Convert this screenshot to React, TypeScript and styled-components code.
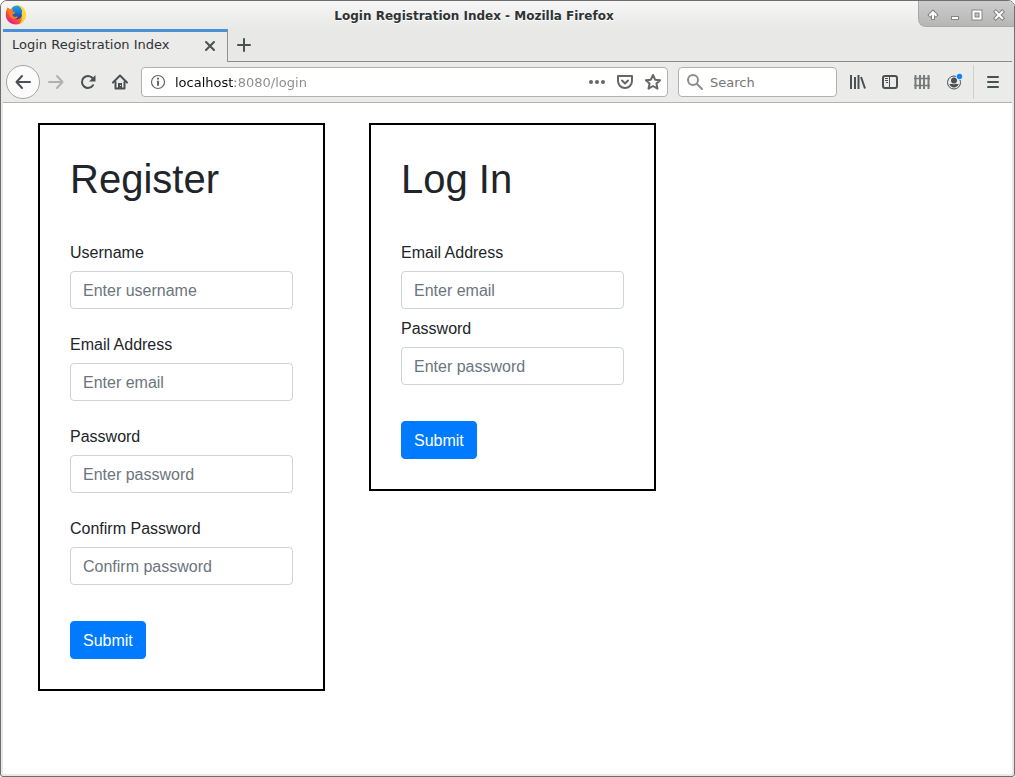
import React from "react";
import styled, { createGlobalStyle, css } from "styled-components";

const GlobalStyle = createGlobalStyle`
  *, *::before, *::after { box-sizing: border-box; }
  body { margin: 0; background: #fff; }
  button, input { font: inherit; color: inherit; }
`;

const chromeFont = `"DejaVu Sans", sans-serif`;
const pageFont = `"Liberation Sans", Arial, sans-serif`;

const BrowserWindow = styled.div`
  display: flex;
  flex-direction: column;
  min-height: 100vh;
  border: 1px solid #6e6e6e;
  border-radius: 7px 7px 3px 3px;
  background: #e8e8e7;
  overflow: hidden;
  font-family: ${chromeFont};
  font-size: 13px;
  color: #2e3436;
`;

const TitleBar = styled.header`
  display: flex;
  align-items: flex-start;
  height: 28px;
  background: linear-gradient(#f6f6f6, #e8e8e7);
`;

const AppIcon = styled.div`
  display: flex;
  width: 29px;
  padding: 3px 0 0 4px;
`;

const WindowTitle = styled.div`
  flex: 1;
  min-width: 0;
  text-align: center;
  font-size: 12px;
  font-weight: bold;
  line-height: 30px;
  white-space: nowrap;
  text-shadow: 0 1px 0 #fff;
`;

const WindowControls = styled.div`
  display: flex;
  justify-content: center;
  gap: 6px;
  width: 96px;
  height: 26px;
  padding: 6px 2px 4px 0;
  border: solid #a9a9a9;
  border-width: 0 0 1px 1px;
  border-radius: 0 0 0 8px;
  background: linear-gradient(#cdcdcd, #b6b6b6);
`;

const PlainButton = styled.button`
  display: flex;
  align-items: center;
  justify-content: center;
  padding: 0;
  border: 0;
  background: none;
`;

const ControlButton = styled(PlainButton)`
  width: 16px;
  height: 16px;
`;

const TabStrip = styled.div`
  display: flex;
  height: 33px;
  padding: 0 2px;
`;

const Tab = styled.div`
  display: flex;
  align-items: flex-start;
  justify-content: space-between;
  width: 225px;
  padding: 0 9px;
  border-top: 3px solid #4a90d9;
  border-right: 1px solid #919191;
  background: #ebebe9;
  line-height: 26px;
`;

const TabRest = styled.div`
  flex: 1;
  padding-left: 6px;
  border-bottom: 1px solid #8c8c8b;
`;

const TabButton = styled(PlainButton)`
  width: 16px;
  height: 28px;
  color: #4a5053;
`;

const NewTabButton = styled(PlainButton)`
  width: 20px;
  height: 32px;
  color: #4a5053;
`;

const NavBar = styled.nav`
  display: flex;
  align-items: center;
  height: 41px;
  margin: 0 2px;
  padding: 0 3px;
  border-bottom: 1px solid #b3b3b0;
  background: #ebebe9;
  color: #4a5053;
`;

const NavButton = styled(PlainButton)<{ $round?: boolean }>`
  flex: none;
  width: 32px;
  height: 34px;
  ${(p) =>
    p.$round &&
    css`
      width: 34px;
      border: 1px solid #a5a5a4;
      border-radius: 50%;
      background: #fbfbfb;
    `}
`;

const fieldBox = css`
  display: flex;
  align-items: center;
  height: 30px;
  border: 1px solid #b1b1af;
  border-radius: 4px;
  background: #fff;
`;

const AddressBar = styled.div`
  ${fieldBox}
  flex: 1;
  min-width: 0;
  gap: 9px;
  margin: 0 10px 0 5px;
  padding: 0 5px 0 8px;
  color: #666;
`;

const AddressInput = styled.input`
  flex: 1;
  min-width: 0;
  height: 28px;
  padding: 0;
  border: 0;
  outline: 0;
  background: linear-gradient(to right, #0c0c0d 60px, #8a8a8a 60px);
  background-clip: text;
  -webkit-text-fill-color: transparent;
`;

const AddressActions = styled.div`
  display: flex;
  gap: 10px;
`;

const AddressButton = styled(PlainButton)`
  width: 18px;
  height: 28px;
`;

const SearchBar = styled.label`
  ${fieldBox}
  flex: none;
  width: 159px;
  gap: 6px;
  margin-right: 5px;
  padding: 0 7px;
  color: #8c8c8c;
`;

const SearchInput = styled.input`
  flex: 1;
  min-width: 0;
  height: 28px;
  padding: 0;
  border: 0;
  outline: 0;
  background: none;
  &::placeholder { color: #757575; opacity: 1; }
`;

const MenuSlot = styled.div`
  margin-left: 3px;
  padding-left: 3px;
  border-left: 1px solid #cfcfcd;
`;

const Page = styled.main`
  flex: 1;
  display: flex;
  flex-wrap: wrap;
  align-items: flex-start;
  align-content: flex-start;
  gap: 44px;
  margin: 0 2px 2px;
  padding: 20px 35px;
  background: #fff;
  font-family: ${pageFont};
  font-size: 16px;
  line-height: 24px;
  color: #212529;
`;

const Card = styled.section`
  width: 287px;
  padding: 30px;
  border: 2px solid #000;
`;

const Heading = styled.h1`
  margin: 0 0 38px;
  font-size: 40px;
  font-weight: 500;
  line-height: 48px;
`;

const Form = styled.form`
  display: flex;
  flex-direction: column;
  gap: 36px;
`;

const Fields = styled.div<{ $gap: number }>`
  display: flex;
  flex-direction: column;
  gap: ${(p) => p.$gap}px;
`;

const Field = styled.div`
  display: flex;
  flex-direction: column;
  gap: 6px;
`;

const TextInput = styled.input`
  width: 100%;
  height: 38px;
  padding: 7px 12px 5px;
  border: 1px solid #ced4da;
  border-radius: 4px;
  background: #fff;
  &::placeholder { color: #6c757d; opacity: 1; }
`;

const SubmitButton = styled.button`
  align-self: flex-start;
  height: 38px;
  padding: 7px 12px 5px;
  border: 1px solid #007bff;
  border-radius: 4px;
  background: #007bff;
  color: #fff;
`;

const FirefoxLogo = () => (
  <svg width="22" height="22" viewBox="0 0 22 22" aria-hidden="true">
    <defs>
      <linearGradient id="flame" x1="0.85" y1="0.1" x2="0.15" y2="0.9">
        <stop offset="0" stopColor="#fff04a" />
        <stop offset="0.35" stopColor="#ffb416" />
        <stop offset="0.6" stopColor="#ff5a2a" />
        <stop offset="1" stopColor="#e5168c" />
      </linearGradient>
      <linearGradient id="globe" x1="0.5" y1="0" x2="0.5" y2="1">
        <stop offset="0" stopColor="#16a8f5" />
        <stop offset="1" stopColor="#2a3aa8" />
      </linearGradient>
    </defs>
    <path d="M2.6 3.4 4.6 5 7 4.4C8.500 2 11 .8 13.500 1.200 18 2 21 6 21 10.500c0 5.500-4.500 10-10 10S.8 16.500.8 11c0-2.800.6-5.500 1.800-7.600z" fill="url(#flame)" />
    <path d="M7 3.800C9 1.600 13 1 15.400 3.400c1.800 2 2.400 5 1.600 8-1 3-4 4.400-6.600 3.800-3-.6-4.600-3-4.200-5.600z" fill="url(#globe)" />
    <path d="M2.600 3.800 5.200 5.400 8 5l-.4 2.200 2.600 1-.8 1.400-2 .8c.2 2 2 2.800 4 2.200l1.600.2c-1 2-3.600 2.800-5.600 1.800C4 13 3 9 2.600 3.800z" fill="#ff7a1c" />
    <path d="M14.500 1.600c4 1.600 6.300 5 6.200 9.400-.2 4-2.700 7.400-6.200 8.600 2.500-3 3.300-5.600 2.500-8.600-.5-2-.2-3 .2-4.200-.4-2-1.400-3.800-2.700-5.200z" fill="#ffd92e" />
  </svg>
);

const Svg = ({ children }: { children: React.ReactNode }) => (
  <svg
    width="16"
    height="16"
    viewBox="0 0 16 16"
    fill="none"
    stroke="currentColor"
    strokeWidth="2"
    strokeLinecap="round"
    strokeLinejoin="round"
    aria-hidden="true"
  >
    {children}
  </svg>
);

const OutlinedGlyph = ({ d }: { d: string }) => (
  <svg width="16" height="16" viewBox="0 0 16 16" fill="none" strokeLinecap="square" aria-hidden="true">
    <path d={d} stroke="#858585" strokeWidth="4" />
    <path d={d} stroke="#fff" strokeWidth="2" />
  </svg>
);

const controls = [
  { label: "Shade", d: "M8 11V5.500M5.200 8 8 5.200 10.800 8" },
  { label: "Minimize", d: "M6 11h4" },
  { label: "Maximize", d: "M4.500 4.500h7v7h-7z" },
  { label: "Close", d: "M4.800 4.800l6.400 6.400M11.200 4.800l-6.400 6.400" },
];

const LibraryIcon = () => (
  <Svg>
    <path d="M1 1v14M5 3v12M8.500 1v14" strokeLinecap="butt" />
    <path d="m11 3 4 11.500" strokeLinecap="butt" />
  </Svg>
);

const SidebarIcon = () => (
  <Svg>
    <rect x="1" y="2" width="14" height="12" rx="2" />
    <path d="M7.500 2v12M3 4.500h3M3 6.500h3M4 8.500h2" strokeWidth="1" strokeLinecap="butt" />
  </Svg>
);

const FenceIcon = () => (
  <svg width="18" height="16" viewBox="0 0 18 16" fill="none" stroke="#777b7c" strokeWidth="2" aria-hidden="true">
    <path d="M2.500 1v14M7 1v14M11 1v14M15.500 1v14" />
    <path d="M1 4.500h16M1 11.500h16" strokeWidth="1.500" />
  </svg>
);

const AccountIcon = () => (
  <svg width="18" height="18" viewBox="0 0 18 18" fill="none" aria-hidden="true">
    <circle cx="9" cy="9.500" r="6.500" stroke="currentColor" strokeWidth="1" />
    <circle cx="9" cy="7.500" r="3" fill="currentColor" />
    <path d="M4.300 11c1.200.2 2.200.2 2.900-.3.900.7 2.700.7 3.600 0 .7.500 1.700.5 2.900.3-.8 2.300-2.600 3.500-4.700 3.500S5.100 13.300 4.300 11z" fill="currentColor" />
    <circle cx="14.500" cy="3.500" r="3.400" fill="#ebebe9" />
    <circle cx="14.500" cy="3.500" r="2.700" fill="#0a84ff" />
  </svg>
);

type FieldSpec = { id: string; label: string; hint: string; type: string };

const registerFields: FieldSpec[] = [
  { id: "reg-username", label: "Username", hint: "Enter username", type: "text" },
  { id: "reg-email", label: "Email Address", hint: "Enter email", type: "email" },
  { id: "reg-password", label: "Password", hint: "Enter password", type: "password" },
  { id: "reg-confirm", label: "Confirm Password", hint: "Confirm password", type: "password" },
];

const loginFields: FieldSpec[] = [
  { id: "login-email", label: "Email Address", hint: "Enter email", type: "email" },
  { id: "login-password", label: "Password", hint: "Enter password", type: "password" },
];

const FormCard = ({ title, fields, gap }: { title: string; fields: FieldSpec[]; gap: number }) => (
  <Card>
    <Heading>{title}</Heading>
    <Form onSubmit={(e) => e.preventDefault()}>
      <Fields $gap={gap}>
        {fields.map((f) => (
          <Field key={f.id}>
            <label htmlFor={f.id}>{f.label}</label>
            <TextInput id={f.id} type={f.type} placeholder={f.hint} />
          </Field>
        ))}
      </Fields>
      <SubmitButton type="submit">Submit</SubmitButton>
    </Form>
  </Card>
);

export default function App() {
  return (
    <>
      <GlobalStyle />
      <BrowserWindow>
        <TitleBar>
          <AppIcon>
            <FirefoxLogo />
          </AppIcon>
          <WindowTitle>Login Registration Index - Mozilla Firefox</WindowTitle>
          <WindowControls>
            {controls.map((c) => (
              <ControlButton key={c.label} aria-label={c.label}>
                <OutlinedGlyph d={c.d} />
              </ControlButton>
            ))}
          </WindowControls>
        </TitleBar>
        <TabStrip>
          <Tab>
            <span>Login Registration Index</span>
            <TabButton aria-label="Close tab">
              <Svg>
                <path d="M4 4l8 8M12 4l-8 8" />
              </Svg>
            </TabButton>
          </Tab>
          <TabRest>
            <NewTabButton aria-label="New tab">
              <Svg>
                <path d="M8 2v12M2 8h12" />
              </Svg>
            </NewTabButton>
          </TabRest>
        </TabStrip>
        <NavBar>
          <NavButton $round aria-label="Back">
            <Svg>
              <path d="M15 8H1.500M7 2 1.500 8 7 14" />
            </Svg>
          </NavButton>
          <NavButton aria-label="Forward" disabled>
            <svg width="16" height="16" viewBox="0 0 16 16" fill="none" stroke="#b0b1b0" strokeWidth="2" strokeLinecap="round" strokeLinejoin="round" aria-hidden="true">
              <path d="M1 8h13.500M9 2l5.500 6L9 14" />
            </svg>
          </NavButton>
          <NavButton aria-label="Reload">
            <Svg>
              <path d="M13 11.200A6 6 0 1 1 12.500 4" />
              <path d="M15.500 1v6.500H9z" fill="currentColor" stroke="none" />
            </Svg>
          </NavButton>
          <NavButton aria-label="Home">
            <Svg>
              <path d="M1 8.500 8 1.500l7 7" />
              <path d="M3.500 8v6.500h9V8" />
              <path d="M6 9h4v5.500H6z" fill="currentColor" stroke="none" />
              <path d="M8.500 11v1" stroke="#ebebe9" strokeWidth="1" strokeLinecap="butt" />
            </Svg>
          </NavButton>
          <AddressBar>
            <Svg>
              <circle cx="8" cy="8" r="6.500" strokeWidth="1.200" />
              <path d="M8 7.500v3.500" />
              <path d="M8 4.600v.1" />
            </Svg>
            <AddressInput aria-label="Address" defaultValue="localhost:8080/login" />
            <AddressActions>
              <AddressButton aria-label="Page actions">
                <svg width="18" height="16" viewBox="0 0 18 16" fill="#666" aria-hidden="true">
                  <circle cx="3" cy="8" r="2" />
                  <circle cx="9" cy="8" r="2" />
                  <circle cx="15" cy="8" r="2" />
                </svg>
              </AddressButton>
              <AddressButton aria-label="Save to Pocket">
                <svg width="16" height="16" viewBox="0 0 16 16" fill="none" stroke="#666" strokeWidth="2" strokeLinecap="round" strokeLinejoin="round" aria-hidden="true">
                  <path d="M1 2h14v5a7 7 0 0 1-14 0z" />
                  <path d="m5 6.500 3 3 3-3" />
                </svg>
              </AddressButton>
              <AddressButton aria-label="Bookmark this page">
                <svg width="18" height="18" viewBox="0 0 18 18" fill="none" stroke="#666" strokeWidth="2" strokeLinejoin="round" aria-hidden="true">
                  <path d="m9 2 2.100 4.700 5 .5-3.700 3.400 1.100 5L9 13l-4.500 2.600 1.100-5L1.900 7.200l5-.5z" />
                </svg>
              </AddressButton>
            </AddressActions>
          </AddressBar>
          <SearchBar>
            <svg width="18" height="18" viewBox="0 0 18 18" fill="none" stroke="currentColor" strokeWidth="2" strokeLinecap="round" aria-hidden="true">
              <circle cx="7" cy="7" r="5" />
              <path d="m11 11 5 5" />
            </svg>
            <SearchInput aria-label="Search" placeholder="Search" />
          </SearchBar>
          <NavButton aria-label="Library">
            <LibraryIcon />
          </NavButton>
          <NavButton aria-label="Sidebars">
            <SidebarIcon />
          </NavButton>
          <NavButton aria-label="Containers">
            <FenceIcon />
          </NavButton>
          <NavButton aria-label="Account">
            <AccountIcon />
          </NavButton>
          <MenuSlot>
            <NavButton aria-label="Open menu">
              <Svg>
                <path d="M3 3h10M3 8h10M3 13h10" />
              </Svg>
            </NavButton>
          </MenuSlot>
        </NavBar>
        <Page>
          <FormCard title="Register" fields={registerFields} gap={24} />
          <FormCard title="Log In" fields={loginFields} gap={8} />
        </Page>
      </BrowserWindow>
    </>
  );
}
